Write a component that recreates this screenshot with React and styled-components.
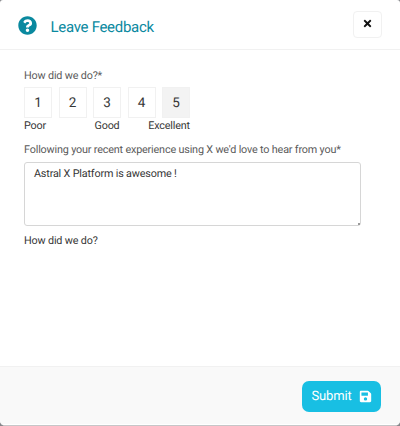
import React, {useState} from "react";

import styled, {createGlobalStyle} from "styled-components";
import {FaQuestionCircle, FaSave, FaTimes} from "react-icons/fa";

const teal = "#0a899f";
const cyan = "#18bfe3";
const grey1 = "#363636";
const grey2 = "#5a5a5a";
const grey4 = "#9a9a9a";
const grey5 = "#d6d6d6";
const grey6 = "#f1f1f1";
const snow = "#f9f9f9";

const GlobalStyle = createGlobalStyle`
  * {
    box-sizing: border-box;
  }

  body {
    margin: 0;
    background: #85868a;
    font-family: Roboto, "Liberation Sans", sans-serif;
    font-size: 10.8px;
    letter-spacing: -0.17px;
    color: ${grey1};
    text-rendering: geometricPrecision;
  }

  button, textarea {
    font-family: inherit;
    letter-spacing: inherit;
    text-rendering: inherit;
  }
`;

const Modal = styled.div`
  display: flex;
  flex-direction: column;
  height: 426px;
  background: white;
  border-bottom: 1px solid #c6c6c8;
  border-radius: 3px 3px 5px 5px;
  overflow: hidden;
`;

const Header = styled.div`
  display: flex;
  align-items: flex-start;
  height: 50px;
  padding: 11px 18px 0;
  border-bottom: 1px solid ${grey6};

  .help-icon {
    margin-top: 5px;
    color: ${teal};
  }
`;

const Title = styled.div`
  flex: 1;
  margin: 6px 0 0 13.5px;
  font-size: 15px;
  line-height: 20px;
  letter-spacing: -0.3px;
  color: ${teal};
`;

const CloseButton = styled.button`
  display: flex;
  align-items: center;
  justify-content: center;
  width: 29px;
  height: 27px;
  padding: 0 0 2px;
  background: white;
  border: 1px solid ${grey6};
  border-radius: 4px;
  color: #111111;
`;

const Content = styled.div`
  flex: 1;
  padding: 18px 39px 0 24px;
`;

const Label = styled.label`
  display: block;
  line-height: 16px;
  color: ${grey2};
`;

const RatingList = styled.div`
  display: flex;
  justify-content: space-between;
  width: 166px;
  margin-top: 3px;
`;

const RatingOption = styled.button`
  width: 28px;
  height: 31px;
  padding: 1px 0 0;
  background: ${({$selected}) => ($selected ? "#f3f3f3" : "white")};
  border: 1px solid ${grey6};
  font-size: 13.5px;
  color: ${grey1};
`;

const RatingCaptions = styled.div`
  display: grid;
  grid-template-columns: 1fr auto 1fr;
  width: 166px;
  line-height: 15px;

  span:last-child {
    text-align: right;
  }
`;

const CommentLabel = styled(Label)`
  margin-top: 9px;
`;

const CommentField = styled.div`
  position: relative;
  width: 337px;
  margin-top: 4px;

  /* resize grip */
  &::after {
    content: "";
    position: absolute;
    right: 1px;
    bottom: 1px;
    width: 2px;
    height: 2px;
    background: ${grey4};
  }
`;

const Comment = styled.textarea`
  display: block;
  width: 100%;
  height: 64px;
  padding: 3px 9px;
  border: 1px solid ${grey5};
  border-radius: 3px;
  outline: none;
  resize: none;
  font-size: 10.8px;
  line-height: 15px;
  color: ${grey1};
`;

const Hint = styled.div`
  margin-top: 7px;
  line-height: 16px;
`;

const Footer = styled.div`
  display: flex;
  justify-content: flex-end;
  height: 59px;
  padding: 14px 19px 0;
  background: ${snow};
  border-top: 1px solid ${grey6};
  border-bottom: 1px solid white;
`;

const SubmitButton = styled.button`
  display: flex;
  align-items: center;
  justify-content: center;
  column-gap: 8px;
  width: 79px;
  height: 31px;
  padding: 0 0 0 1px;
  background: ${cyan};
  border: none;
  border-radius: 7px;
  font-size: 13px;
  color: white;
`;

const ratings = [1, 2, 3, 4, 5];

export default function App() {
    const [rating, setRating] = useState(5);
    const [comment, setComment] = useState("Astral X Platform is awesome !");

    return (
        <>
            <GlobalStyle/>
            <Modal>
                <Header>
                    <FaQuestionCircle className={"help-icon"} size={19}/>
                    <Title>Leave Feedback</Title>
                    <CloseButton aria-label={"Close"}>
                        <FaTimes size={11}/>
                    </CloseButton>
                </Header>
                <Content>
                    <Label>How did we do?*</Label>
                    <RatingList>
                        {ratings.map(item => (
                            <RatingOption
                                key={item}
                                $selected={item === rating}
                                onClick={() => setRating(item)}
                            >
                                {item}
                            </RatingOption>
                        ))}
                    </RatingList>
                    <RatingCaptions>
                        <span>Poor</span>
                        <span>Good</span>
                        <span>Excellent</span>
                    </RatingCaptions>
                    <CommentLabel htmlFor={"comment"}>
                        Following your recent experience using X we'd love to hear from you*
                    </CommentLabel>
                    <CommentField>
                        <Comment
                            id={"comment"}
                            spellCheck={false}
                            value={comment}
                            onChange={e => setComment(e.target.value)}
                        />
                    </CommentField>
                    <Hint>How did we do?</Hint>
                </Content>
                <Footer>
                    <SubmitButton>
                        Submit
                        <FaSave size={13}/>
                    </SubmitButton>
                </Footer>
            </Modal>
        </>
    );
}
